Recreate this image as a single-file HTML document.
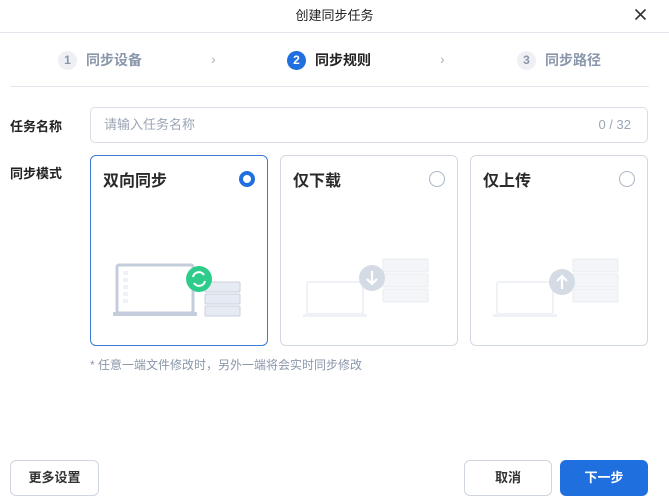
<!DOCTYPE html>
<html><head><meta charset="utf-8"><style>
*{box-sizing:border-box;margin:0;padding:0}
body{width:669px;height:498px;background:#fff;font-family:"Liberation Sans","Noto Sans CJK SC",sans-serif;position:relative;overflow:hidden;color:#222}
.a{position:absolute}
.title{left:0;top:0;width:669px;height:33px;line-height:32px;text-align:center;font-size:13px;color:#222;border-bottom:1px solid #e3e6ec}
.step{font-size:14px;font-weight:bold;color:#8a97ab;top:50px;height:20px;line-height:20px;display:flex;align-items:center}
.num{width:19px;height:19px;border-radius:50%;background:#eef0f4;color:#8a97ab;font-size:12px;font-weight:bold;text-align:center;line-height:19px;margin-right:9px}
.chev{top:51px;font-size:14px;color:#aab3c2}
.lab{font-size:13px;font-weight:bold;color:#222;left:10px}
.card{top:155px;width:178px;height:191px;border:1px solid #d3d9e3;border-radius:6px}
.card .t{position:absolute;left:12px;top:11px;font-size:16px;font-weight:bold;color:#2a2a2a}
.radio{position:absolute;right:12px;top:15px;width:16px;height:16px;border-radius:50%;border:1px solid #aab4c4;background:#fff}
.btn{top:460px;height:36px;border:1px solid #cfd6e0;border-radius:6px;text-align:center;line-height:34px;font-size:13px;font-weight:bold;color:#333;background:#fff}
</style></head><body>
<div class="a title">创建同步任务</div>
<svg class="a" style="left:634px;top:8px" width="13" height="13" viewBox="0 0 13 13"><path d="M1.5 1.5L11.5 11.5M11.5 1.5L1.5 11.5" stroke="#333" stroke-width="1.6"/></svg>

<div class="a step" style="left:58px"><span class="num">1</span>同步设备</div>
<div class="a chev" style="left:211px">›</div>
<div class="a step" style="left:287px;color:#222"><span class="num" style="background:#1f6fdf;color:#fff">2</span>同步规则</div>
<div class="a chev" style="left:440px">›</div>
<div class="a step" style="left:517px"><span class="num">3</span>同步路径</div>
<div class="a" style="left:10px;top:86px;width:639px;height:1px;background:#e3e6ec"></div>

<div class="a lab" style="top:116px">任务名称</div>
<div class="a" style="left:90px;top:107px;width:558px;height:36px;border:1px solid #d9dee6;border-radius:5px;font-size:13px;color:#9aa5b5;line-height:34px;padding-left:13px">请输入任务名称<span style="position:absolute;right:16px">0 / 32</span></div>

<div class="a lab" style="top:163px">同步模式</div>

<div class="a card" style="left:90px;border-color:#3a7bd5"><div class="t">双向同步</div><div class="radio" style="border:4px solid #1f6fdf"></div>
<svg class="a" style="left:20px;top:105px" width="140" height="60" viewBox="0 0 140 60">
<rect x="6" y="4" width="76" height="48" rx="2" fill="#fff" stroke="#c4cddb" stroke-width="3"/>
<rect x="2" y="51" width="84" height="4" rx="1" fill="#c4cddb"/>
<g fill="#eef1f6"><rect x="12" y="10" width="5" height="4"/><rect x="12" y="17" width="5" height="4"/><rect x="12" y="24" width="5" height="4"/><rect x="12" y="31" width="5" height="4"/><rect x="12" y="38" width="5" height="4"/></g>
<g fill="#e6ebf3" stroke="#c8d1de"><rect x="94" y="21" width="35" height="10" rx="1"/><rect x="94" y="33" width="35" height="10" rx="1"/><rect x="94" y="45" width="35" height="10" rx="1"/></g>
<circle cx="88" cy="18" r="13" fill="#2ecc8a"/>
<path d="M82 16a6 6 0 0 1 11-2M94 20a6 6 0 0 1-11 2" stroke="#fff" stroke-width="2" fill="none"/>
</svg></div>

<div class="a card" style="left:280px"><div class="t">仅下载</div><div class="radio"></div>
<svg class="a" style="left:20px;top:100px" width="140" height="65" viewBox="0 0 140 65">
<rect x="6" y="26" width="56" height="32" rx="2" fill="#fff" stroke="#eef1f5" stroke-width="2"/>
<rect x="2" y="58" width="64" height="3" fill="#eef1f5"/>
<g fill="#f3f5f9" stroke="#e8ecf2"><rect x="82" y="3" width="45" height="13" rx="1"/><rect x="82" y="18" width="45" height="13" rx="1"/><rect x="82" y="33" width="45" height="13" rx="1"/></g>
<circle cx="71" cy="22" r="13" fill="#d5dbe4"/>
<path d="M71 15v12M66 23l5 5 5-5" stroke="#fff" stroke-width="2.2" fill="none"/>
</svg></div>

<div class="a card" style="left:470px"><div class="t">仅上传</div><div class="radio"></div>
<svg class="a" style="left:20px;top:100px" width="140" height="65" viewBox="0 0 140 65">
<rect x="6" y="26" width="56" height="32" rx="2" fill="#fff" stroke="#eef1f5" stroke-width="2"/>
<rect x="2" y="58" width="64" height="3" fill="#eef1f5"/>
<g fill="#f3f5f9" stroke="#e8ecf2"><rect x="82" y="3" width="45" height="13" rx="1"/><rect x="82" y="18" width="45" height="13" rx="1"/><rect x="82" y="33" width="45" height="13" rx="1"/></g>
<circle cx="71" cy="26" r="13" fill="#d5dbe4"/>
<path d="M71 33v-12M66 25l5-5 5 5" stroke="#fff" stroke-width="2.2" fill="none"/>
</svg></div>

<div class="a" style="left:90px;top:356px;font-size:12px;color:#8a97ab">* 任意一端文件修改时，另外一端将会实时同步修改</div>

<div class="a btn" style="left:10px;width:89px">更多设置</div>
<div class="a btn" style="left:464px;width:88px">取消</div>
<div class="a btn" style="left:560px;width:88px;background:#1f6fdf;border-color:#1f6fdf;color:#fff">下一步</div>
</body></html>
